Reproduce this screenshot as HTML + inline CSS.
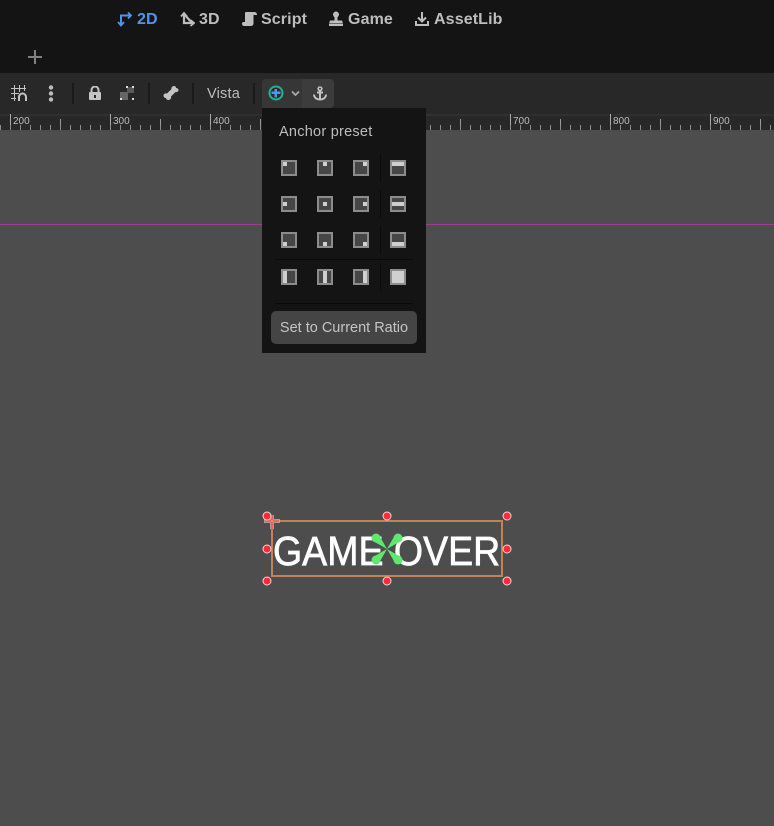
<!DOCTYPE html>
<html>
<head>
<meta charset="utf-8">
<style>
html,body{margin:0;padding:0;background:#4d4d4d;}
#p{position:relative;width:774px;height:826px;overflow:hidden;background:#4d4d4d;font-family:"Liberation Sans",sans-serif;}
.a{position:absolute;}
.t{position:absolute;white-space:nowrap;font-weight:700;font-size:16px;line-height:20px;top:10px;color:#bdbdbd;letter-spacing:.12px;}
.r{position:absolute;top:116px;font-size:10px;line-height:11px;color:#bdbdbd;}
.sep{position:absolute;top:83px;width:2px;height:21px;background:#1a1a1a;}
.g{position:absolute;width:12px;height:12px;border:2px solid #8c8c8c;background:#464646;}
.g i{position:absolute;background:#cfcfcf;display:block;}
.vs{position:absolute;left:380px;width:1px;height:28px;background:#0b0b0b;}
.hs{position:absolute;left:275px;width:138px;height:1px;background:#0b0b0b;}
</style>
</head>
<body>
<div id="p">
<div class="a" style="left:0;top:0;width:774px;height:73px;background:#141414"></div>
<div class="a" style="left:0;top:73px;width:774px;height:42px;background:#282828"></div>
<div class="a" style="left:0;top:114px;width:774px;height:2px;background:#303030"></div>
<div class="a" style="left:0;top:116px;width:774px;height:14px;background:#282828"></div>

<svg class="a" style="left:117px;top:11px" width="16" height="16" viewBox="0 0 16 16" fill="none" stroke="#4f95f0" stroke-width="2"><path d="M4 14V4.500H13"/><path d="M1 11l3 3.500 3-3.500" stroke-width="1.800"/><path d="M11 1.500l3 3-3 3" stroke-width="1.800"/></svg>
<div class="t" style="left:137px;color:#4f95f0">2D</div>
<svg class="a" style="left:180px;top:11px" width="15" height="16" viewBox="0 0 15 16" fill="none" stroke="#bdbdbd" stroke-width="2.200"><path d="M4 3v9h10"/><path d="M4 3l9 10"/><path d="M1 5.500l3-3.500 3 3.500" stroke-width="1.800"/><path d="M10.500 9l3.500 3-3.500 3" stroke-width="1.800"/></svg>
<div class="t" style="left:199px">3D</div>
<svg class="a" style="left:242px;top:11px" width="15" height="16" viewBox="0 0 15 16" fill="#bdbdbd"><path d="M4 1h8c2 0 3 1 3 3h-3.500v8c0 2-1 3-3 3H2c-1.200 0-2-1-2-2.500 0-1 .8-1.500 1.500-1.500H3V3c0-1 0-2 1-2z"/></svg>
<div class="t" style="left:261px">Script</div>
<svg class="a" style="left:329px;top:11px" width="14" height="16" viewBox="0 0 14 16" fill="#bdbdbd"><circle cx="7" cy="3.500" r="3"/><rect x="5.500" y="5" width="3" height="5"/><path d="M1 9.500h12l1 3H0zM0 13h14v2H0z"/></svg>
<div class="t" style="left:348px">Game</div>
<svg class="a" style="left:415px;top:11px" width="14" height="16" viewBox="0 0 14 16" fill="none" stroke="#bdbdbd" stroke-width="2"><path d="M7 1v9M3 6.500l4 4 4-4"/><path d="M1 10v4h12v-4"/></svg>
<div class="t" style="left:434px">AssetLib</div>

<svg class="a" style="left:27px;top:49px" width="16" height="16" fill="#808080"><rect x="7" y="1" width="2" height="14"/><rect x="1" y="7" width="14" height="2"/></svg>

<svg class="a" style="left:11px;top:85px" width="16" height="16" viewBox="0 0 16 16" fill="none" stroke="#c4c4c4" stroke-width="1"><path d="M0 3.500h15M0 8.500h8M0 13.500h5M3.500 0v16M8.500 0v7M13.500 0v6"/><path d="M8 16v-4a3 3 0 0 1 7 0v4" stroke-width="2"/></svg>
<svg class="a" style="left:47px;top:85px" width="8" height="17" fill="#bdbdbd"><circle cx="4" cy="2.500" r="2.200"/><circle cx="4" cy="8.500" r="2.200"/><circle cx="4" cy="14.500" r="2.200"/></svg>
<div class="sep" style="left:72px"></div>
<svg class="a" style="left:89px;top:86px" width="12" height="14" viewBox="0 0 12 14"><path d="M2.500 6V4a3.500 3.500 0 0 1 7 0v2" fill="none" stroke="#c4c4c4" stroke-width="2"/><rect x="0" y="6" width="12" height="8" rx="1" fill="#c4c4c4"/><rect x="5" y="9" width="2" height="3" fill="#282828"/></svg>
<svg class="a" style="left:120px;top:86px" width="14" height="14"><rect x="0" y="6" width="8" height="8" fill="#666"/><rect x="7" y="1" width="7" height="6" fill="#5a5a5a"/><rect x="6" y="0" width="2" height="2" fill="#ddd"/><rect x="12" y="0" width="2" height="2" fill="#ddd"/><rect x="0" y="12" width="2" height="2" fill="#ddd"/><rect x="12" y="12" width="2" height="2" fill="#ddd"/></svg>
<div class="sep" style="left:148px"></div>
<svg class="a" style="left:163px;top:85px" width="16" height="16" viewBox="0 0 16 16" fill="#c4c4c4"><path d="M11 1c1.500 0 2 1 2 2 1 0 2.500.500 2.500 2s-1.500 2.500-3 2L8 11.500c.500 1.500-.500 3.500-2.500 3.500S3 13.500 3 13c-1 0-2.500-.500-2.500-2.500S3 8 4 8.500L8.500 4C8 2.500 9.500 1 11 1z"/></svg>
<div class="sep" style="left:192px"></div>
<div class="a" style="left:207px;top:85px;font-size:14.500px;line-height:18px;color:#bdbdbd;letter-spacing:.2px">Vista</div>
<div class="sep" style="left:253px"></div>

<div class="a" style="left:262px;top:79px;width:72px;height:29px;background:#3c3c3c;border-radius:4px"></div>
<div class="a" style="left:262px;top:79px;width:40px;height:29px;background:#363636;border-radius:4px 0 0 0"></div>
<svg class="a" style="left:268px;top:85px" width="16" height="16"><circle cx="8" cy="8" r="6.500" fill="#2a2a2a" stroke="#22b392" stroke-width="2"/><path d="M3.500 6.500h9v2.500h-9z" fill="#4f95f0"/><path d="M6.500 4h2.500v8.500H6.500z" fill="#4f95f0"/></svg>
<svg class="a" style="left:291px;top:90px" width="9" height="7" fill="none" stroke="#aaa" stroke-width="1.800"><path d="M1 1.500l3.500 3.500 3.500-3.500"/></svg>
<svg class="a" style="left:313px;top:86px" width="14" height="15" viewBox="0 0 14 15" fill="none" stroke="#c4c4c4" stroke-width="2"><circle cx="7" cy="2.800" r="1.800" stroke-width="1.600"/><path d="M7 4.500V13M4 6.500h6"/><path d="M1 8.500c0 3 2.500 5 6 5s6-2 6-5" stroke-width="1.800"/></svg>

<div class="a" style="left:10px;top:114px;width:764px;height:16px;background-image:repeating-linear-gradient(90deg,#aaa 0,#aaa 1px,transparent 1px,transparent 100px)"></div>
<div class="a" style="left:60px;top:119px;width:714px;height:11px;background-image:repeating-linear-gradient(90deg,#9a9a9a 0,#9a9a9a 1px,transparent 1px,transparent 100px)"></div>
<div class="a" style="left:0;top:125px;width:774px;height:5px;background-image:repeating-linear-gradient(90deg,#8d8d8d 0,#8d8d8d 1px,transparent 1px,transparent 10px)"></div>
<div class="r" style="left:13px">200</div>
<div class="r" style="left:113px">300</div>
<div class="r" style="left:213px">400</div>
<div class="r" style="left:513px">700</div>
<div class="r" style="left:613px">800</div>
<div class="r" style="left:713px">900</div>

<div class="a" style="left:0;top:224px;width:774px;height:1px;background:#9c3f92"></div>

<div class="a" style="left:262px;top:108px;width:164px;height:245px;background:#141414"></div>
<div class="a" style="left:279px;top:123px;font-size:14.500px;line-height:18px;color:#bdbdbd;letter-spacing:.25px">Anchor preset</div>

<div class="g" style="left:281px;top:160px"><i style="left:0;top:0;width:4px;height:4px"></i></div>
<div class="g" style="left:317px;top:160px"><i style="left:4px;top:0;width:4px;height:4px"></i></div>
<div class="g" style="left:353px;top:160px"><i style="left:8px;top:0;width:4px;height:4px"></i></div>
<div class="g" style="left:390px;top:160px"><i style="left:0;top:0;width:12px;height:4px"></i></div>

<div class="g" style="left:281px;top:196px"><i style="left:0;top:4px;width:4px;height:4px"></i></div>
<div class="g" style="left:317px;top:196px"><i style="left:4px;top:4px;width:4px;height:4px"></i></div>
<div class="g" style="left:353px;top:196px"><i style="left:8px;top:4px;width:4px;height:4px"></i></div>
<div class="g" style="left:390px;top:196px"><i style="left:0;top:4px;width:12px;height:4px"></i></div>

<div class="g" style="left:281px;top:232px"><i style="left:0;top:8px;width:4px;height:4px"></i></div>
<div class="g" style="left:317px;top:232px"><i style="left:4px;top:8px;width:4px;height:4px"></i></div>
<div class="g" style="left:353px;top:232px"><i style="left:8px;top:8px;width:4px;height:4px"></i></div>
<div class="g" style="left:390px;top:232px"><i style="left:0;top:8px;width:12px;height:4px"></i></div>

<div class="g" style="left:281px;top:269px"><i style="left:0;top:0;width:4px;height:12px"></i></div>
<div class="g" style="left:317px;top:269px"><i style="left:4px;top:0;width:4px;height:12px"></i></div>
<div class="g" style="left:353px;top:269px"><i style="left:8px;top:0;width:4px;height:12px"></i></div>
<div class="g" style="left:390px;top:269px"><i style="left:0;top:0;width:12px;height:12px"></i></div>

<div class="vs" style="top:154px"></div>
<div class="vs" style="top:190px"></div>
<div class="vs" style="top:226px"></div>
<div class="vs" style="top:263px"></div>
<div class="hs" style="top:259px"></div>
<div class="hs" style="top:303px"></div>

<div class="a" style="left:271px;top:311px;width:146px;height:33px;background:#454545;border-radius:5px"></div>
<div class="a" style="left:271px;top:312px;width:146px;height:33px;text-align:center;font-size:14.500px;line-height:33px;color:#c4c4c4;white-space:nowrap">Set to Current Ratio</div>

<div class="a" style="left:271px;top:520px;width:228px;height:53px;border:2px solid #c28257"></div>
<div class="a" style="left:273px;top:521px;font-family:'Liberation Sans',sans-serif;font-weight:400;-webkit-text-stroke:.7px #fff;font-size:41px;line-height:60px;color:#fff;white-space:nowrap;transform:scaleX(.915);transform-origin:0 0">GAME OVER</div>

<svg class="a" style="left:260px;top:508px" width="256" height="82">
<g transform="translate(-260 -508)">
<path d="M270 515h4v14h-4zM264 519h16v4h-16z" fill="#d8b8b8" fill-opacity=".7"/>
<path d="M271.200 515v14h1.600v-14zM265 520.200h14v1.600h-14z" fill="#f0524f"/>
<g fill="#5fe86e">
<circle cx="376" cy="538" r="4.500"/><circle cx="398" cy="538" r="4.500"/><circle cx="376" cy="560" r="4.500"/><circle cx="398" cy="560" r="4.500"/>
<path d="M373 541L387 549 379 535zM401 541L387 549 395 535zM373 557L387 549 379 563zM401 557L387 549 395 563z"/>
</g>
<g fill="#ff2a38" stroke="#f3d6d6" stroke-width="1">
<circle cx="267" cy="516" r="4"/><circle cx="387" cy="516" r="4"/><circle cx="507" cy="516" r="4"/>
<circle cx="267" cy="549" r="4"/><circle cx="507" cy="549" r="4"/>
<circle cx="267" cy="581" r="4"/><circle cx="387" cy="581" r="4"/><circle cx="507" cy="581" r="4"/>
</g>
</g>
</svg>
</div>
</body>
</html>
